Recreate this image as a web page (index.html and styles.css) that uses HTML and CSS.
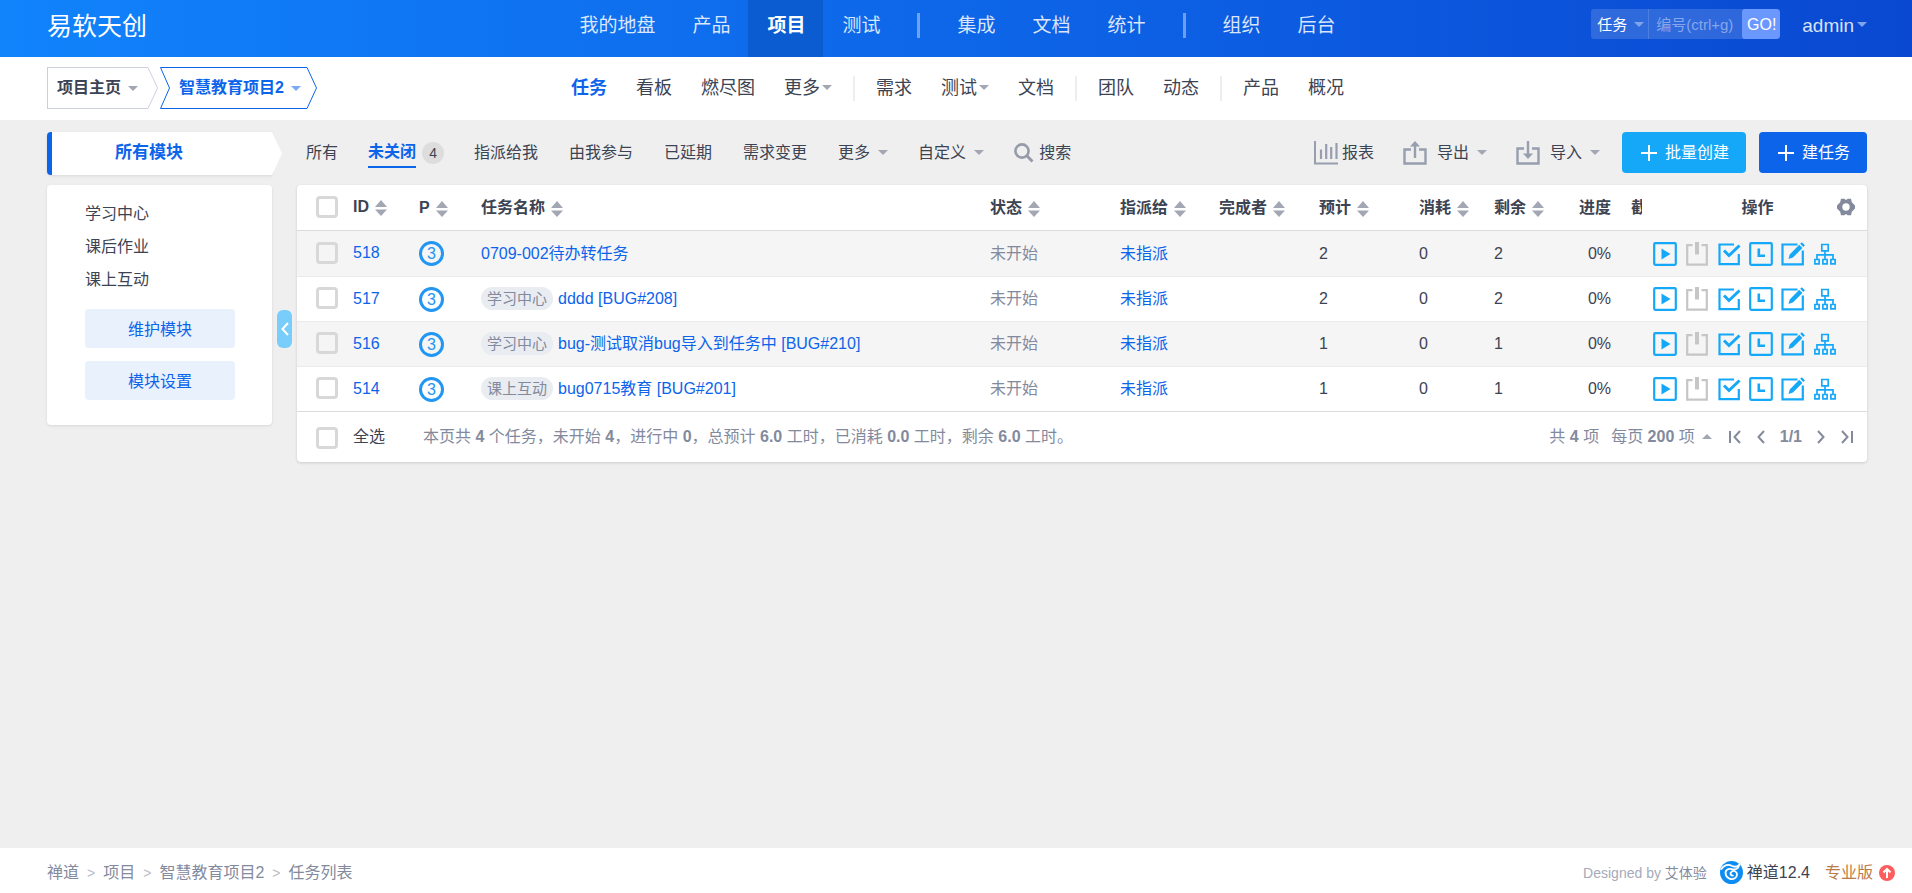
FILE: index.html
```
<!DOCTYPE html>
<html lang="zh-CN">
<head>
    <meta charset="UTF-8">
    <meta name="viewport" content="width=device-width, initial-scale=1.0">
    <title>任务列表 - 禅道</title>
    <link rel="stylesheet" href="styles.css">
</head>
<body>

    <!-- icons -->
    <svg class="icon-defs" aria-hidden="true">
        <symbol id="i-sort" viewBox="0 0 12 16">
            <path d="M6 0l6 7H0zM6 16L0 9.500h12z" fill="currentColor"/>
        </symbol>
        <symbol id="i-play" viewBox="0 0 24 24">
            <rect x="1.200" y="1.200" width="21.600" height="21.600" rx="1" fill="none" stroke="currentColor" stroke-width="2.200"/>
            <path d="M8.500 6.500v11l9-5.500z" fill="currentColor"/>
        </symbol>
        <symbol id="i-off" viewBox="0 0 24 24">
            <path d="M7.500 3.200H2.200v19.400h19.600V3.200h-5.300" fill="none" stroke="currentColor" stroke-width="2.200"/>
            <path d="M10 0h4v12.500h-4z" fill="currentColor"/>
        </symbol>
        <symbol id="i-check" viewBox="0 0 24 24">
            <path d="M17 2.500H2.500v19.600h19.300V12" fill="none" stroke="currentColor" stroke-width="2.200"/>
            <path d="M7 8.500l5 5L22.500 3.500" fill="none" stroke="currentColor" stroke-width="3"/>
        </symbol>
        <symbol id="i-clock" viewBox="0 0 24 24">
            <rect x="1.200" y="1.200" width="21.600" height="21.600" rx="1" fill="none" stroke="currentColor" stroke-width="2.200"/>
            <path d="M9.800 6.500v7.300H16" fill="none" stroke="currentColor" stroke-width="2.600"/>
        </symbol>
        <symbol id="i-edit" viewBox="0 0 24 24">
            <path d="M16.500 2.500H1.500v19.800h20.300V8.500" fill="none" stroke="currentColor" stroke-width="2.200"/>
            <path d="M7.500 17l1.200-4.600L18.200 2.800l3.200 3.200-9.500 9.600zM19.200 1.800l1.700-1.600 3 3-1.600 1.700z" fill="currentColor"/>
        </symbol>
        <symbol id="i-tree" viewBox="0 0 24 24">
            <path d="M8.800 2.500h6.400v6.300H8.800zM12 9v8M4 17v-4.200h16V17M1.900 17.500h4.200v4.300H1.900zM9.900 17.500h4.200v4.300H9.900zM17.900 17.500h4.200v4.300h-4.200z" fill="none" stroke="currentColor" stroke-width="1.700"/>
        </symbol>
        <symbol id="i-gear" viewBox="0 0 18 18">
            <path d="M4 .8h3.200L9 2l1.800-1.200H14l.8 3.500L18 7.500v3l-3.200 3.200-.8 3.500h-3.200L9 16l-1.800 1.200H4l-.8-3.500L0 10.500v-3l3.200-3.200zM9 5.300a3.700 3.700 0 1 0 0 7.400 3.700 3.700 0 0 0 0-7.400z" fill="currentColor" fill-rule="evenodd"/>
        </symbol>
        <symbol id="i-plus" viewBox="0 0 16 16">
            <path d="M8 0v16M0 8h16" fill="none" stroke="currentColor" stroke-width="2"/>
        </symbol>
        <symbol id="i-search" viewBox="0 0 20 20">
            <circle cx="8" cy="8" r="6.600" fill="none" stroke="currentColor" stroke-width="2.600"/>
            <path d="M12.800 12.800l5.700 5.700" stroke="currentColor" stroke-width="3"/>
        </symbol>
        <symbol id="i-chart" viewBox="0 0 24 24">
            <path d="M1 0v22.500h23" fill="none" stroke="currentColor" stroke-width="2"/>
            <path d="M7 8.500v9.500M12.200 3v15M17.200 6v12M22.500 2v16" stroke="currentColor" stroke-width="2.200"/>
        </symbol>
        <symbol id="i-export" viewBox="0 0 24 24">
            <path d="M8 8.500H1.500v14h21v-14H16M12 17V4" fill="none" stroke="currentColor" stroke-width="2.400"/>
            <path d="M12 0l5 5.500H7z" fill="currentColor"/>
        </symbol>
        <symbol id="i-import" viewBox="0 0 24 24">
            <path d="M8 7.500H1.500v15h21v-15H16M12 0v14" fill="none" stroke="currentColor" stroke-width="2.400"/>
            <path d="M12 18l5-5.500H7z" fill="currentColor"/>
        </symbol>
    </svg>

    <header class="header">
        <h1 class="logo">易软天创</h1>
        <nav class="main-nav">
            <a href="#">我的地盘</a>
            <a href="#">产品</a>
            <a href="#" class="active">项目</a>
            <a href="#">测试</a>
            <span class="divider"></span>
            <a href="#">集成</a>
            <a href="#">文档</a>
            <a href="#">统计</a>
            <span class="divider"></span>
            <a href="#">组织</a>
            <a href="#">后台</a>
        </nav>
        <div class="header-right">
            <form class="search-box" onsubmit="return false">
                <div class="search-type">
                    <select aria-label="类型">
                        <option>任务</option>
                        <option>需求</option>
                    </select>
                    <span class="caret"></span>
                </div>
                <input type="text" placeholder="编号(ctrl+g)" aria-label="编号">
                <button type="submit">GO!</button>
            </form>
            <a href="#" class="user">admin<span class="caret"></span></a>
        </div>
    </header>

    <div class="sub-header">
        <div class="crumbs">
            <button type="button" class="crumb">
                <span class="crumb-body">项目主页<span class="caret"></span></span>
                <svg class="crumb-tip" viewBox="0 0 10 42"><path d="M0 .5L9.500 21 0 41.500"/></svg>
            </button>
            <button type="button" class="crumb current">
                <svg class="crumb-tip" viewBox="0 0 10 42"><path d="M10 .5H.5L9.500 21 .5 41.500H10"/></svg>
                <span class="crumb-body">智慧教育项目2<span class="caret"></span></span>
                <svg class="crumb-tip" viewBox="0 0 10 42"><path d="M0 .5L9.500 21 0 41.500"/></svg>
            </button>
        </div>
        <nav class="sub-nav">
            <a href="#" class="active">任务</a>
            <a href="#">看板</a>
            <a href="#">燃尽图</a>
            <a href="#">更多<span class="caret"></span></a>
            <span class="divider"></span>
            <a href="#">需求</a>
            <a href="#">测试<span class="caret"></span></a>
            <a href="#">文档</a>
            <span class="divider"></span>
            <a href="#">团队</a>
            <a href="#">动态</a>
            <span class="divider"></span>
            <a href="#">产品</a>
            <a href="#">概况</a>
        </nav>
    </div>

    <main class="main">
        <aside class="sidebar">
            <div class="side-title">
                <h2>所有模块</h2>
                <svg viewBox="0 0 10 43"><path d="M0 0l10 21.500L0 43z"/></svg>
            </div>
            <div class="side-panel">
                <ul>
                    <li><a href="#">学习中心</a></li>
                    <li><a href="#">课后作业</a></li>
                    <li><a href="#">课上互动</a></li>
                </ul>
                <button type="button" class="side-btn">维护模块</button>
                <button type="button" class="side-btn">模块设置</button>
                <button type="button" class="side-toggle" aria-label="收起">
                    <svg viewBox="0 0 8 14"><path d="M7 1L1.500 7 7 13"/></svg>
                </button>
            </div>
        </aside>

        <section class="content">
            <div class="toolbar">
                <div class="filters">
                    <a href="#">所有</a>
                    <a href="#" class="active"><span>未关闭</span><b class="badge">4</b></a>
                    <a href="#">指派给我</a>
                    <a href="#">由我参与</a>
                    <a href="#">已延期</a>
                    <a href="#">需求变更</a>
                    <button type="button">更多<span class="caret"></span></button>
                    <button type="button">自定义<span class="caret"></span></button>
                    <button type="button"><svg class="icon-search"><use href="#i-search"/></svg>搜索</button>
                </div>
                <div class="tools">
                    <button type="button" class="tool report"><svg><use href="#i-chart"/></svg>报表</button>
                    <button type="button" class="tool"><svg><use href="#i-export"/></svg>导出<span class="caret"></span></button>
                    <button type="button" class="tool"><svg><use href="#i-import"/></svg>导入<span class="caret"></span></button>
                    <button type="button" class="btn btn-info"><svg><use href="#i-plus"/></svg>批量创建</button>
                    <button type="button" class="btn btn-primary"><svg><use href="#i-plus"/></svg>建任务</button>
                </div>
            </div>

            <div class="table-panel">
                <table class="tasks">
                    <colgroup>
                        <col class="c-id"><col class="c-pri"><col>
                        <col class="c-status"><col class="c-assign"><col class="c-done">
                        <col class="c-done"><col class="c-cost"><col class="c-cost">
                        <col class="c-progress"><col class="c-deadline"><col class="c-actions">
                    </colgroup>
                    <thead>
                        <tr>
                            <th class="id"><input type="checkbox" aria-label="全选">ID<svg class="sort"><use href="#i-sort"/></svg></th>
                            <th>P<svg class="sort"><use href="#i-sort"/></svg></th>
                            <th>任务名称<svg class="sort"><use href="#i-sort"/></svg></th>
                            <th>状态<svg class="sort"><use href="#i-sort"/></svg></th>
                            <th>指派给<svg class="sort"><use href="#i-sort"/></svg></th>
                            <th>完成者<svg class="sort"><use href="#i-sort"/></svg></th>
                            <th>预计<svg class="sort"><use href="#i-sort"/></svg></th>
                            <th>消耗<svg class="sort"><use href="#i-sort"/></svg></th>
                            <th>剩余<svg class="sort"><use href="#i-sort"/></svg></th>
                            <th class="progress">进度</th>
                            <th class="deadline">截止</th>
                            <th class="actions">操作<button type="button" class="gear" aria-label="设置"><svg><use href="#i-gear"/></svg></button></th>
                        </tr>
                    </thead>
                    <tbody id="taskRows"></tbody>
                </table>
                <div class="table-footer">
                    <label class="check-all"><input type="checkbox">全选</label>
                    <p class="summary">本页共 <b>4</b> 个任务，未开始 <b>4</b>，进行中 <b>0</b>，总预计 <b>6.0</b> 工时，已消耗 <b>0.0</b> 工时，剩余 <b>6.0</b> 工时。</p>
                    <div class="pager">
                        <span>共 <b>4</b> 项</span>
                        <button type="button" class="page-size">每页 <b>200</b> 项<span class="caret up"></span></button>
                        <button type="button" aria-label="首页"><svg viewBox="0 0 14 14"><path d="M2 1v12M12 1L6.500 7l5.500 6"/></svg></button>
                        <button type="button" aria-label="上一页"><svg viewBox="0 0 14 14"><path d="M10 1L4.500 7l5.500 6"/></svg></button>
                        <b>1/1</b>
                        <button type="button" aria-label="下一页"><svg viewBox="0 0 14 14"><path d="M4 1l5.500 6L4 13"/></svg></button>
                        <button type="button" aria-label="末页"><svg viewBox="0 0 14 14"><path d="M12 1v12M2 1l5.500 6L2 13"/></svg></button>
                    </div>
                </div>
            </div>
        </section>
    </main>

    <footer class="footer">
        <nav class="path">
            <a href="#">禅道</a><i>&gt;</i><a href="#">项目</a><i>&gt;</i><a href="#">智慧教育项目2</a><i>&gt;</i><span>任务列表</span>
        </nav>
        <div class="powered">
            <span class="designed">Designed by <a href="#">艾体验</a></span>
            <a href="#" class="version">
                <svg viewBox="0 0 24 24">
                    <circle cx="12" cy="12" r="12" fill="#0d8cf4"/>
                    <path d="M1 9c3-5 8-6 11-4 3 1.500 6 1 8-1-.5 4-4 5.500-7.500 4.500C8 7.200 5 10 6 14c1 4.500 6 6 9.500 4 3-1.800 3-6 .2-7.300-2.400-1-5 .6-4.700 2.800.2 1.600 2 2.200 3 1.200" fill="none" stroke="#fff" stroke-width="1.900"/>
                </svg>禅道12.4</a>
            <a href="#" class="pro">专业版
                <svg viewBox="0 0 16 16"><circle cx="8" cy="8" r="8" fill="#ff5d5d"/><path d="M8 13V4.500M4.500 7.500L8 4l3.500 3.500" fill="none" stroke="#fff" stroke-width="2"/></svg>
            </a>
        </div>
    </footer>

    <script>
        const tasks = [
            { id: 518, module: '', name: '0709-002待办转任务', estimate: 2, consumed: 0, left: 2 },
            { id: 517, module: '学习中心', name: 'dddd [BUG#208]', estimate: 2, consumed: 0, left: 2 },
            { id: 516, module: '学习中心', name: 'bug-测试取消bug导入到任务中 [BUG#210]', estimate: 1, consumed: 0, left: 1 },
            { id: 514, module: '课上互动', name: 'bug0715教育 [BUG#201]', estimate: 1, consumed: 0, left: 1 }
        ];

        const actions = [
            { icon: 'play', title: '开始' },
            { icon: 'off', title: '关闭' },
            { icon: 'check', title: '完成' },
            { icon: 'clock', title: '工时' },
            { icon: 'edit', title: '编辑' },
            { icon: 'tree', title: '分解' }
        ];

        function actionButton(action) {
            const disabled = action.icon === 'off' ? 'disabled' : '';
            return `<button type="button" title="${action.title}" ${disabled}><svg><use href="#i-${action.icon}"/></svg></button>`;
        }

        document.getElementById('taskRows').innerHTML = tasks.map(task => `
            <tr>
                <td class="id"><input type="checkbox" aria-label="${task.id}"><a href="#">${task.id}</a></td>
                <td><span class="pri">3</span></td>
                <td>${task.module ? `<span class="module">${task.module}</span>` : ''}<a href="#">${task.name}</a></td>
                <td class="status">未开始</td>
                <td><a href="#">未指派</a></td>
                <td></td>
                <td>${task.estimate}</td>
                <td>${task.consumed}</td>
                <td>${task.left}</td>
                <td class="progress">0%</td>
                <td></td>
                <td><div class="row-actions">${actions.map(actionButton).join('')}</div></td>
            </tr>
        `).join('');
    </script>

</body>
</html>
```
FILE: styles.css
```
* {
    box-sizing: border-box;
}

body {
    margin: 0;
    min-height: 100vh;
    display: flex;
    flex-direction: column;
    font-family: "Liberation Sans", "Noto Sans CJK SC", sans-serif;
    font-size: 16px;
    line-height: 24px;
    color: #3c4353;
    background-color: #efefef;
}

a {
    color: inherit;
    text-decoration: none;
}

button,
input,
select {
    font: inherit;
    color: inherit;
    margin: 0;
    padding: 0;
    border: none;
    background: none;
}

button {
    cursor: pointer;
}

.icon-defs {
    display: none;
}

.caret {
    display: inline-block;
    flex: none;
    width: 0;
    height: 0;
    border: 5px solid transparent;
    border-top-color: #a2a7b3;
    border-bottom: none;
    vertical-align: middle;
}

.caret.up {
    border-top: none;
    border-bottom: 5px solid #a2a7b3;
}

/* header */
.header {
    display: grid;
    grid-template-columns: 1fr auto 1fr;
    height: 57px;
    padding: 0 45px 0 47px;
    background: linear-gradient(90deg, #1183fb, #0d63e6 55%, #0a48d1);
    color: #fff;
}

.logo {
    margin: 0;
    font-size: 25px;
    font-weight: normal;
    line-height: 52px;
}

.main-nav {
    display: flex;
    font-size: 19px;
    line-height: 52px;
}

.main-nav a {
    padding: 0 18px 0 19px;
    color: rgba(255, 255, 255, 0.85);
}

.main-nav a.active {
    color: #fff;
    font-weight: bold;
    background-color: #0b5bd1;
}

.main-nav .divider {
    width: 3px;
    height: 25px;
    margin: 13px 18px 0 19px;
    background-color: rgba(255, 255, 255, 0.4);
}

.header-right {
    display: flex;
    justify-content: flex-end;
    gap: 22px;
    padding-top: 9px;
}

.search-box {
    display: flex;
    height: 30px;
    border-radius: 3px;
    overflow: hidden;
    background-color: rgba(255, 255, 255, 0.15);
}

.search-type {
    position: relative;
    width: 58px;
    border-right: 1px solid #4a80e4;
}

.search-type select {
    appearance: none;
    width: 100%;
    height: 30px;
    padding: 1px 0 0 6px;
    font-size: 15px;
}

.search-type option {
    color: #3c4353;
}

.search-type .caret {
    position: absolute;
    top: 13px;
    right: 4px;
}

.header .caret {
    border-top-color: #7fa4ec;
    pointer-events: none;
}

.search-box input {
    width: 93px;
    padding: 1px 0 0 7px;
    font-size: 15px;
}

.search-box input::placeholder {
    color: #87a6ea;
}

.search-box button {
    width: 38px;
    padding: 2px 0 0 1px;
    font-size: 16px;
    border-radius: 3px;
    background-color: #6b98ff;
}

.user {
    height: 30px;
    font-size: 19px;
    line-height: 34px;
    color: rgba(255, 255, 255, 0.85);
}

.user .caret {
    margin: 0 0 4px 3px;
}

/* sub header */
.sub-header {
    display: grid;
    grid-template-columns: 1fr auto 1fr;
    align-items: center;
    height: 63px;
    padding: 0 45px 1px 47px;
    background-color: #fff;
}

.crumbs {
    display: flex;
    gap: 2px;
}

.crumb {
    display: flex;
    height: 42px;
    font-weight: bold;
    color: #3c4353;
}

.crumb-body {
    display: flex;
    align-items: center;
    gap: 7px;
    height: 42px;
    padding: 0 10px 0 9px;
    border: 1px solid #cbd0db;
    border-right: none;
}

.crumb-tip {
    width: 10px;
    height: 42px;
    fill: none;
    stroke: #cbd0db;
}

.crumb.current {
    color: #0c64eb;
}

.crumb.current .crumb-body {
    gap: 7px;
    border-color: #0c64eb;
    border-left: none;
    padding-right: 6px;
}

.crumb.current .crumb-tip {
    stroke: #0c64eb;
}

.crumb.current .caret {
    border-top-color: #7ca9f4;
}

.sub-nav {
    display: flex;
    align-items: center;
    font-size: 18px;
}

.sub-nav a {
    padding: 0 14px 0 15px;
}

.sub-nav a.active {
    color: #0c64eb;
    font-weight: bold;
}

.sub-nav .caret {
    margin: 0 0 3px 2px;
}

.sub-nav .divider {
    width: 2px;
    height: 25px;
    margin: 0 6px 0 7px;
    background-color: #eee;
}

/* main */
.main {
    flex: 1;
    display: grid;
    grid-template-columns: 225px minmax(0, 1fr);
    align-items: start;
    gap: 25px;
    padding: 12px 45px 24px 47px;
}

.side-title {
    position: relative;
    height: 43px;
    margin-bottom: 10px;
    border-left: 5px solid #0c64eb;
    border-radius: 4px 0 0 4px;
    background-color: #fff;
    box-shadow: 0 1px 3px rgba(0, 0, 0, 0.1);
}

.side-title h2 {
    margin: 0;
    padding-right: 26px;
    font-size: 17px;
    line-height: 41px;
    text-align: center;
    color: #0c64eb;
}

.side-title svg {
    position: absolute;
    top: 0;
    left: 100%;
    width: 10px;
    height: 43px;
    fill: #fff;
}

.side-panel {
    position: relative;
    padding: 12px 37px 25px 38px;
    border-radius: 4px;
    background-color: #fff;
    box-shadow: 0 1px 3px rgba(0, 0, 0, 0.1);
}

.side-panel ul {
    margin: 0 0 13px;
    padding: 0;
    list-style: none;
    line-height: 33px;
}

.side-btn {
    display: block;
    width: 100%;
    height: 39px;
    padding-top: 2px;
    border-radius: 4px;
    background-color: #e8f1fc;
    color: #0c64eb;
}

.side-btn + .side-btn {
    margin-top: 13px;
}

.side-toggle {
    position: absolute;
    top: 125px;
    right: -20px;
    width: 15px;
    height: 38px;
    border-radius: 6px;
    background-color: #79cdfb;
}

.side-toggle svg {
    display: block;
    width: 8px;
    height: 14px;
    margin: 0 auto;
    fill: none;
    stroke: #fff;
    stroke-width: 2;
}

/* toolbar */
.toolbar {
    display: flex;
    justify-content: space-between;
    height: 41px;
    margin-bottom: 12px;
}

.filters,
.tools {
    display: flex;
    align-items: center;
    white-space: nowrap;
}

.filters {
    gap: 31px;
    padding-left: 9px;
}

.filters a,
.filters button {
    display: flex;
    align-items: center;
}

.filters .caret,
.tools .caret {
    margin-left: 8px;
}

.filters button .caret {
    margin-right: -1px;
}

.filters .active {
    margin: 0 -1px;
    color: #0c64eb;
    gap: 6px;
}

.filters .active span {
    font-weight: bold;
    line-height: 28px;
    border-bottom: 2px solid #0c64eb;
}

.badge {
    width: 22px;
    height: 22px;
    border-radius: 11px;
    background-color: #ddd;
    color: #3c4353;
    font-size: 14px;
    font-weight: normal;
    line-height: 22px;
    text-align: center;
}

.icon-search {
    width: 20px;
    height: 20px;
    margin-right: 5px;
    color: #959ba8;
}

.tool {
    display: flex;
    align-items: center;
    margin-right: 29px;
}

.tool svg {
    width: 24px;
    height: 24px;
    margin-right: 10px;
    color: #979ead;
}

.report svg {
    margin-right: 4px;
}

.tool + .btn {
    margin-left: -7px;
}

.btn {
    display: flex;
    align-items: center;
    gap: 8px;
    height: 41px;
    padding: 0 17px 0 19px;
    border-radius: 4px;
    color: #fff;
}

.btn svg {
    width: 16px;
    height: 16px;
}

.btn-info {
    background-color: #16a8f8;
}

.btn-primary {
    margin-left: 13px;
    background-color: #0c64eb;
}

/* task table */
.table-panel {
    border-radius: 4px;
    background-color: #fff;
    box-shadow: 0 1px 3px rgba(0, 0, 0, 0.15);
}

.tasks {
    width: 100%;
    table-layout: fixed;
    border-collapse: separate;
    border-spacing: 0;
}

.c-id { width: 122px; }
.c-pri { width: 62px; }
.c-status { width: 130px; }
.c-assign { width: 99px; }
.c-done { width: 100px; }
.c-cost { width: 75px; }
.c-progress { width: 42px; }
.c-deadline { width: 31px; }
.c-actions { width: 225px; }

.tasks th,
.tasks td {
    height: 45px;
    padding: 0;
    text-align: left;
    white-space: nowrap;
    overflow: hidden;
    border-bottom: 1px solid #ebebeb;
}

.tasks th,
.tasks tbody tr:first-child td {
    height: 46px;
}

.tasks th,
.tasks tr:last-child td {
    border-color: #dadbdf;
}

.tasks tbody tr:nth-child(odd) {
    background-color: #f5f5f5;
}

.tasks a {
    color: #0c64eb;
}

.tasks .id {
    padding-left: 19px;
}

.tasks .progress {
    text-align: right;
}

.tasks .deadline {
    padding-left: 20px;
    text-overflow: clip;
}

.tasks .actions {
    position: relative;
    padding-left: 6px;
    text-align: center;
}

.gear {
    position: absolute;
    top: 13px;
    right: 12px;
    width: 18px;
    height: 18px;
    color: #838a9d;
}

.gear svg {
    display: block;
    width: 18px;
    height: 18px;
}

.sort {
    width: 12px;
    height: 16px;
    margin-left: 6px;
    color: #a2a7b3;
    vertical-align: -4px;
}

input[type="checkbox"] {
    appearance: none;
    width: 22px;
    height: 22px;
    margin-right: 15px;
    border: 3px solid #d8d8d8;
    border-radius: 4px;
    vertical-align: middle;
}

.tasks input[type="checkbox"] {
    margin-bottom: 2px;
}

input[type="checkbox"]:checked {
    background-color: #0c64eb;
}

.pri {
    display: block;
    width: 25px;
    height: 25px;
    border: 3px solid #2196f3;
    border-radius: 50%;
    color: #2196f3;
    line-height: 20px;
    text-align: center;
}

.module {
    display: inline-block;
    margin-right: 5px;
    padding: 0 6px;
    border-radius: 12px;
    background-color: #e9ecf1;
    color: #838a9d;
    font-size: 15px;
    line-height: 23px;
}

.status {
    color: #838a9d;
}

.row-actions {
    display: flex;
    gap: 8px;
    padding-left: 11px;
}

.row-actions button {
    width: 24px;
    height: 24px;
    color: #16a8f8;
}

.row-actions button:disabled {
    color: #c6c6c6;
}

.row-actions svg {
    display: block;
    width: 24px;
    height: 24px;
}

.table-footer {
    display: flex;
    align-items: center;
    height: 50px;
    padding: 0 13px 0 19px;
    color: #838a9d;
}

.check-all {
    color: #3c4353;
}

.summary {
    flex: 1;
    margin: 0 0 0 38px;
}

.pager {
    display: flex;
    align-items: center;
    gap: 12px;
}

.pager svg {
    display: block;
    width: 14px;
    height: 14px;
    fill: none;
    stroke: #838a9d;
    stroke-width: 2;
}

.page-size .caret {
    margin: 0 4px 2px 7px;
}

/* footer */
.footer {
    display: flex;
    align-items: center;
    justify-content: space-between;
    height: 45px;
    padding: 4px 17px 0 47px;
    background-color: #fff;
    color: #838a9d;
}

.path i {
    margin: 0 8px;
    font-style: normal;
    font-size: 14px;
    color: #b9bdc8;
}

.powered {
    display: flex;
    align-items: center;
}

.designed {
    font-size: 14px;
    color: #a6aab8;
}

.designed a {
    color: #838a9d;
}

.version {
    display: flex;
    align-items: center;
    gap: 4px;
    margin: 0 15px 0 13px;
    color: #3c4353;
}

.version svg {
    width: 23px;
    height: 23px;
}

.pro {
    display: flex;
    align-items: center;
    gap: 6px;
    color: #bd7b46;
}

.pro svg {
    width: 16px;
    height: 16px;
}
```
